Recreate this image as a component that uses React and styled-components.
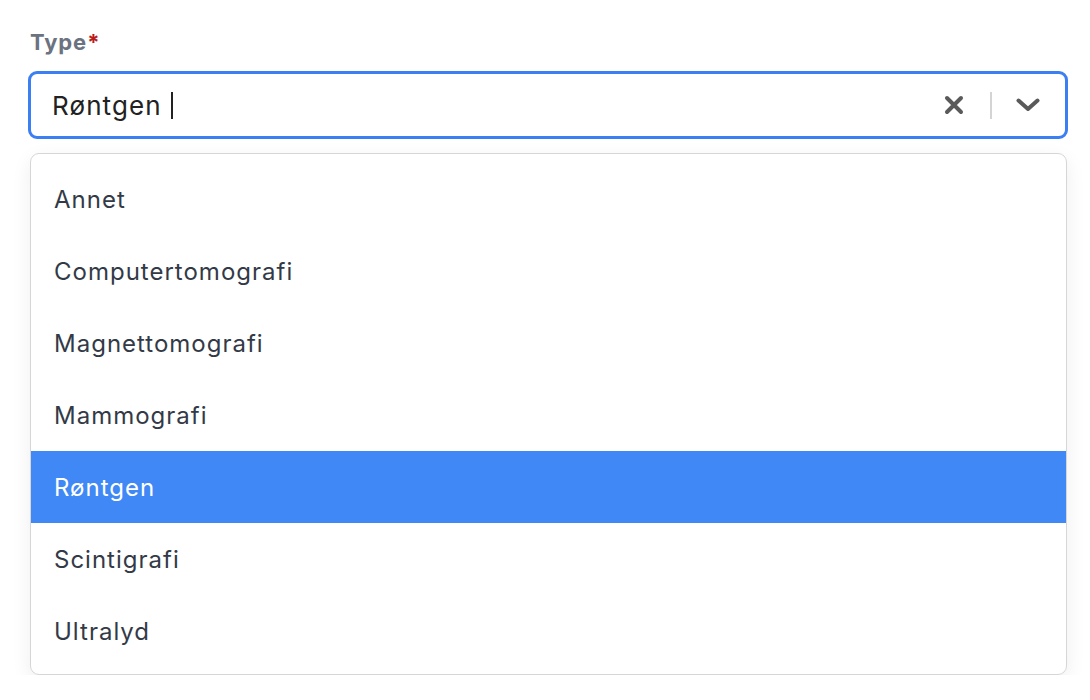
import React from "react";
import styled, { createGlobalStyle } from "styled-components";

const options = [
  "Annet",
  "Computertomografi",
  "Magnettomografi",
  "Mammografi",
  "Røntgen",
  "Scintigrafi",
  "Ultralyd",
];

const Global = createGlobalStyle`
  body {
    margin: 0;
    background: #ffffff;
    font-family: Inter, "Noto Sans", sans-serif;
  }
`;

const Page = styled.div`
  padding: 28px 22px 0 28px;
  width: 1040px;
`;

const Label = styled.div`
  font-size: 22px;
  font-weight: 700;
  letter-spacing: 0.9px;
  color: #6b7280;
  padding-left: 2px;
  height: 28px;
  line-height: 28px;
`;

const Star = styled.span`
  color: #b91c1c;
`;

const Control = styled.div`
  margin-top: 15px;
  height: 68px;
  box-sizing: border-box;
  border: 3px solid #3b7ff2;
  border-radius: 9px;
  display: flex;
  align-items: center;
  padding: 0 25px 0 21px;
`;

const Value = styled.div`
  flex: 1;
  display: flex;
  align-items: center;
  font-size: 26px;
  letter-spacing: 1.1px;
  color: #222;
`;

const Caret = styled.span`
  display: inline-block;
  width: 2px;
  height: 27px;
  background: #222;
  margin-left: 9px;
`;

const Indicators = styled.div`
  display: flex;
  align-items: center;
`;

const Sep = styled.span`
  width: 2px;
  height: 27px;
  background: #d4d4d4;
  margin: 0 24px 0 26px;
`;

const Menu = styled.div`
  margin-top: 14px;
  margin-left: 2px;
  margin-right: 1px;
  border: 1.5px solid #d6d6d6;
  border-radius: 9px;
  box-shadow: 0 6px 20px rgba(0, 0, 0, 0.07);
  padding: 9px 0 7px;
  overflow: hidden;
`;

const Option = styled.div`
  height: 72px;
  display: flex;
  align-items: center;
  padding-left: 23px;
  font-size: 24px;
  letter-spacing: 1px;
  color: ${(p) => (p.$active ? "#ffffff" : "#333a47")};
  background: ${(p) => (p.$active ? "#4088f5" : "transparent")};
`;

export default function App() {
  return (
    <>
      <Global />
      <Page>
        <Label>
          Type<Star>*</Star>
        </Label>
        <Control>
          <Value>
            Røntgen
            <Caret />
          </Value>
          <Indicators>
            <svg width="20" height="20" viewBox="0 0 20 20">
              <path
                d="M3 3 L17 17 M17 3 L3 17"
                stroke="#5a5a5a"
                strokeWidth="4"
                strokeLinecap="round"
              />
            </svg>
            <Sep />
            <svg width="24" height="14" viewBox="0 0 24 14">
              <path
                d="M2.5 2.5 L12 11 L21.5 2.5"
                stroke="#5a5a5a"
                strokeWidth="4"
                fill="none"
                strokeLinecap="round"
                strokeLinejoin="round"
              />
            </svg>
          </Indicators>
        </Control>
        <Menu>
          {options.map((o) => (
            <Option key={o} $active={o === "Røntgen"}>
              {o}
            </Option>
          ))}
        </Menu>
      </Page>
    </>
  );
}
